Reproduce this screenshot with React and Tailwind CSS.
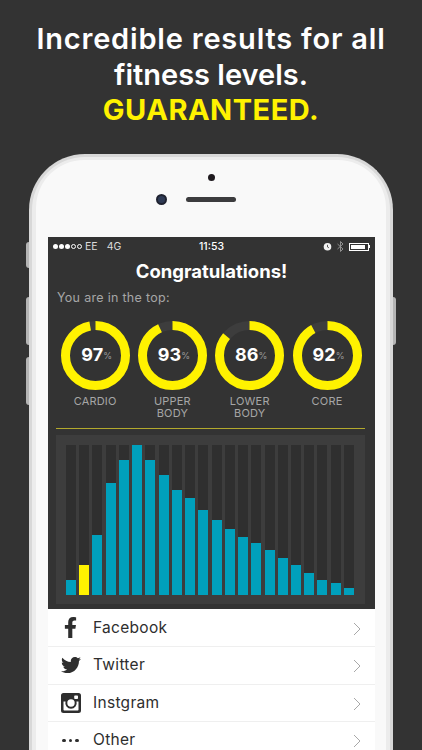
import { FaFacebookF, FaTwitter } from 'react-icons/fa';

const rings = [
  { value: 97, label: ['CARDIO'] },
  { value: 93, label: ['UPPER', 'BODY'] },
  { value: 86, label: ['LOWER', 'BODY'] },
  { value: 92, label: ['CORE'] },
];

const bars = [15, 30, 60, 112, 135, 150, 135, 120, 105, 97, 85, 75, 66, 58, 52, 45, 37, 30, 22, 15, 12, 7];

const InstagramIcon = () => (
  <svg width="20" height="20" viewBox="0 0 20 20">
    <path fillRule="evenodd" fill="#2e2e2e" d="M2.5 0h15A2.5 2.5 0 0 1 20 2.500v15a2.500 2.500 0 0 1-2.500 2.500h-15A2.500 2.500 0 0 1 0 17.500v-15A2.500 2.500 0 0 1 2.500 0zM2.500 8.500v8.300c0 .4.300.7.700.7h13.600c.4 0 .7-.3.7-.7V8.500h-2a5.700 5.700 0 1 1-11 0zM10 6.300a3.700 3.700 0 1 0 0 7.400 3.700 3.700 0 0 0 0-7.400zM14 2.500a.8.8 0 0 0-.8.8v2c0 .4.400.8.800.8h2.200c.4 0 .8-.4.800-.8v-2a.8.8 0 0 0-.8-.8z" />
  </svg>
);

const Dots = () => (
  <div className="flex gap-[3px]">
    <span className="h-[3.5px] w-[3.5px] rounded-full bg-[#2e2e2e]" />
    <span className="h-[3.5px] w-[3.5px] rounded-full bg-[#2e2e2e]" />
    <span className="h-[3.5px] w-[3.5px] rounded-full bg-[#2e2e2e]" />
  </div>
);

const rows = [
  { name: 'Facebook', icon: <FaFacebookF size={21} color="#2e2e2e" /> },
  { name: 'Twitter', icon: <FaTwitter size={20} color="#2e2e2e" /> },
  { name: 'Instgram', icon: <InstagramIcon /> },
  { name: 'Other', icon: <Dots /> },
];

function Ring({ value, label }) {
  const r = 30;
  const c = 2 * Math.PI * r;
  const filled = (value / 100) * c;
  return (
    <div className="flex w-[77.3px] shrink-0 flex-col items-center">
      <div className="relative h-[69px] w-[69px]">
        <svg width="69" height="69" viewBox="0 0 69 69">
          <circle cx="34.5" cy="34.5" r={r} fill="none" stroke="#3d3d3d" strokeWidth="9" />
          <circle
            cx="34.5"
            cy="34.5"
            r={r}
            fill="none"
            stroke="#fff200"
            strokeWidth="9"
            strokeDasharray={`${filled} ${c}`}
            transform="rotate(-90 34.5 34.5)"
          />
        </svg>
        <div className="absolute inset-0 flex items-center justify-center pl-[3px]">
          <span className="text-[18px] leading-none font-bold text-white">{value}</span>
          <span className="mt-[1px] text-[9px] leading-none text-[#9a9a9a]">%</span>
        </div>
      </div>
      <div className="mt-[5px] text-center text-[11px] leading-[12.5px] tracking-[0.2px] text-[#a6a6a6]">
        {label.map((l) => (
          <div key={l}>{l}</div>
        ))}
      </div>
    </div>
  );
}

export default function App() {
  return (
    <div className="relative h-[750px] w-[422px] overflow-hidden bg-[#333333] font-['Inter',sans-serif]">
      <div className="h-[154px] pt-[21px] text-center text-[29px] leading-[35.5px] font-semibold text-white">
        <div className="tracking-[0.8px]">Incredible results for all</div>
        <div>fitness levels.</div>
        <div className="font-bold tracking-[0.5px] text-[#fff200]">GUARANTEED.</div>
      </div>

      <div className="relative ml-[29px] h-[596px] w-[364px]">
        {/* side buttons */}
        <div className="absolute top-[88px] left-[-3px] h-[26px] w-[3px] rounded-l-sm bg-[#b5b5b5]" />
        <div className="absolute top-[143px] left-[-3px] h-[48px] w-[3px] rounded-l-sm bg-[#b5b5b5]" />
        <div className="absolute top-[203px] left-[-3px] h-[48px] w-[3px] rounded-l-sm bg-[#b5b5b5]" />
        <div className="absolute top-[143px] right-[-3px] h-[48px] w-[3px] rounded-r-sm bg-[#b5b5b5]" />

        <div className="h-full rounded-t-[56px] border-x-[3px] border-t-[3px] border-[#d8d8d8] bg-[#ececec] px-[4px] pt-[3px]">
          <div className="flex h-full flex-col rounded-t-[48px] bg-[#f9f9f9] pr-[11px] pl-[12px]">
            <div className="relative h-[77px] shrink-0">
              <div className="absolute top-[13.5px] left-[159.5px] h-[7px] w-[7px] rounded-full bg-[#1f1a1f]" />
              <div className="absolute top-[33.5px] left-[107.5px] h-[11px] w-[11px] rounded-full border-[2px] border-[#1f2230] bg-[#2f3b55]" />
              <div className="absolute top-[36.5px] left-[138px] h-[5px] w-[50px] rounded-full bg-[#3c3c3e]" />
            </div>

            <div className="flex h-[372px] shrink-0 flex-col bg-[#333333]">
              <div className="flex h-[19px] items-center justify-between pr-[5px] pl-[5px] text-[10.5px] text-[#dcdcdc]">
                <div className="flex w-[90px] items-center">
                  <div className="flex gap-[1px]">
                    <span className="h-[5px] w-[5px] rounded-full bg-white" />
                    <span className="h-[5px] w-[5px] rounded-full bg-white" />
                    <span className="h-[5px] w-[5px] rounded-full bg-white" />
                    <span className="h-[5px] w-[5px] rounded-full border-[0.5px] border-white" />
                    <span className="h-[5px] w-[5px] rounded-full border-[0.5px] border-white" />
                  </div>
                  <span className="ml-[3px]">EE</span>
                  <span className="ml-[9px]">4G</span>
                </div>
                <span className="font-medium text-white">11:53</span>
                <div className="flex w-[90px] items-center justify-end gap-[5px]">
                  <svg width="9" height="9" viewBox="0 0 9 9">
                    <circle cx="4.5" cy="4.8" r="3.8" fill="#f2f2f2" />
                    <path d="M4.5 2.8v2.200l1.400.8" stroke="#333" strokeWidth="0.8" fill="none" />
                  </svg>
                  <svg width="7" height="11" viewBox="0 0 7 11">
                    <path d="M0.5 3l5.500 5-2.500 2.500v-10L6 3l-5.500 5" stroke="#9a9a9a" strokeWidth="0.9" fill="none" />
                  </svg>
                  <div className="flex items-center">
                    <div className="h-[8px] w-[20px] border-[1px] border-white p-[1px]">
                      <div className="h-full w-[14px] bg-white" />
                    </div>
                    <div className="h-[3px] w-[1px] bg-white" />
                  </div>
                </div>
              </div>

              <div className="mt-[3px] text-center text-[18.5px] leading-[24px] font-bold text-white">Congratulations!</div>

              <div className="mt-[7px] pl-[9px] text-[12.5px] leading-[16px] tracking-[0.3px] text-[#a6a6a6]">You are in the top:</div>

              <div className="mt-[14.5px] flex h-[107.5px] pl-[8.5px]">
                {rings.map((ring) => (
                  <Ring key={ring.value} value={ring.value} label={ring.label} />
                ))}
              </div>

              <div className="mr-[10px] ml-[8px] h-[1px] shrink-0 bg-[#b3a92d]" />

              <div className="mt-[6px] mr-[10px] ml-[8px] flex h-[169px] items-end justify-between bg-[#3d3d3d] pt-[10px] pr-[11px] pb-[9px] pl-[10px]">
                {bars.map((h, i) => (
                  <div key={i} className="flex h-full w-[10px] items-end bg-[#2f2f2f]">
                    <div
                      className={i === 1 ? 'w-full bg-[#fff200]' : 'w-full bg-[#00a0bc]'}
                      style={{ height: h }}
                    />
                  </div>
                ))}
              </div>
            </div>

            <div className="flex-1 bg-white pt-[0.5px]">
              {rows.map((row) => (
                <div key={row.name} className="flex h-[37.5px] items-center border-b border-[#efefef] text-[#2e2e2e]">
                  <div className="flex w-[45px] justify-center">{row.icon}</div>
                  <span className="mb-[1px] text-[15.5px] tracking-[0.3px]">{row.name}</span>
                  <svg className="mt-[2px] mr-[14px] ml-auto" width="8" height="14" viewBox="0 0 8 14">
                    <path d="M1 1l6 6-6 6" stroke="#a8a8a8" strokeWidth="1" fill="none" />
                  </svg>
                </div>
              ))}
            </div>
          </div>
        </div>
      </div>
    </div>
  );
}
